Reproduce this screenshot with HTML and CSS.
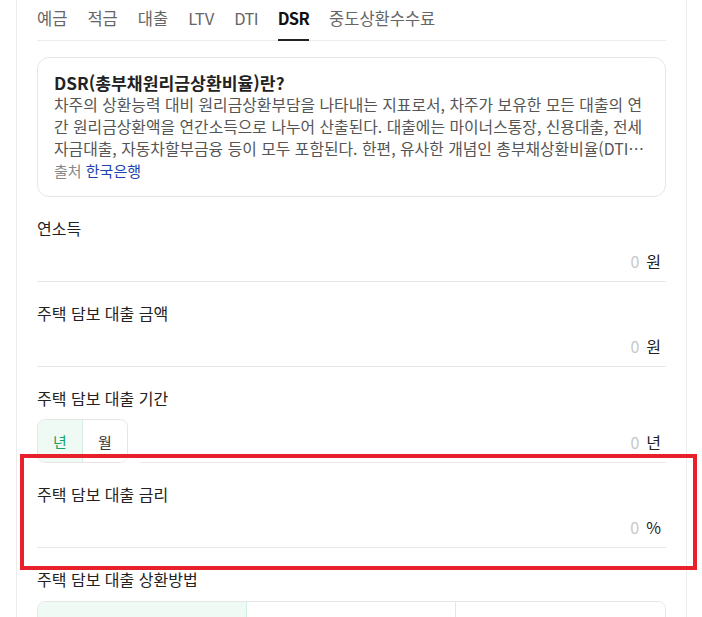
FILE: index.html
```html
<!DOCTYPE html>
<html lang="ko">
    <head>
        <meta charset="UTF-8" />
        <meta name="viewport" content="width=device-width, initial-scale=1.0" />
        <title>DSR 계산기</title>
        <link rel="stylesheet" href="styles.css">
    </head>
    <body>
        <div class="page">
            <nav class="tabs">
                <a class="tab">예금</a>
                <a class="tab">적금</a>
                <a class="tab">대출</a>
                <a class="tab">LTV</a>
                <a class="tab latin">DTI</a>
                <a class="tab latin active">DSR</a>
                <a class="tab">중도상환수수료</a>
            </nav>

            <div class="info-box">
                <h3 class="info-title">DSR(총부채원리금상환비율)란?</h3>
                <p class="info-text">차주의 상환능력 대비 원리금상환부담을 나타내는 지표로서, 차주가 보유한 모든 대출의 연간 원리금상환액을 연간소득으로 나누어 산출된다. 대출에는 마이너스통장, 신용대출, 전세자금대출, 자동차할부금융 등이 모두 포함된다. 한편, 유사한 개념인 총부채상환비율(DTI)은 주택담보대출의 원리금상환액과 기타대출의 이자상환액을 연간소득으로 나누어 산출한다.</p>
                <div class="info-source"><span>출처</span> <span class="source-link">한국은행</span></div>
            </div>

            <div class="field">
                <div class="field-label">연소득</div>
                <div class="field-row">
                    <div class="value"><span class="num">0</span><span class="unit">원</span></div>
                </div>
            </div>

            <div class="field">
                <div class="field-label">주택 담보 대출 금액</div>
                <div class="field-row">
                    <div class="value"><span class="num">0</span><span class="unit">원</span></div>
                </div>
            </div>

            <div class="field">
                <div class="field-label">주택 담보 대출 기간</div>
                <div class="field-row split">
                    <div class="toggle">
                        <button class="seg active">년</button>
                        <button class="seg">월</button>
                    </div>
                    <div class="value boxed"><span class="num">0</span><span class="unit">년</span></div>
                </div>
            </div>

            <div class="field">
                <div class="field-label">주택 담보 대출 금리</div>
                <div class="field-row">
                    <div class="value"><span class="num">0</span><span class="unit">%</span></div>
                </div>
            </div>

            <div class="field">
                <div class="field-label">주택 담보 대출 상환방법</div>
                <div class="methods">
                    <button class="method active"></button>
                    <button class="method"></button>
                    <button class="method"></button>
                </div>
            </div>
        </div>

        <div class="highlight"></div>
    </body>
</html>
```

FILE: styles.css
```css
* {
    margin: 0;
    padding: 0;
    box-sizing: border-box;
}

body {
    font-family: "Noto Sans CJK KR", "Noto Sans", sans-serif;
    background: #fff;
    color: #222;
}

.page {
    width: 671px;
    margin-left: 16px;
    min-height: 617px;
    padding: 0 20px;
    border-left: 1px solid #ececec;
    border-right: 1px solid #ececec;
}

/* tabs */
.tabs {
    display: flex;
    gap: 20px;
    border-bottom: 1px solid #ececec;
}

.tab {
    font-size: 16.5px;
    line-height: 24px;
    padding: 6px 0 9px;
    color: #666;
    border-bottom: 2px solid transparent;
    margin-bottom: -1px;
}

.tab.latin {
    letter-spacing: -0.7px;
}

.tab.active {
    color: #111;
    font-weight: 700;
    border-bottom-color: #222;
}

/* info */
.info-box {
    margin-top: 16px;
    padding: 14px 16px;
    border: 1px solid #e6e6e6;
    border-radius: 12px;
}

.info-title {
    font-size: 17.2px;
    line-height: 22px;
    font-weight: 700;
    color: #222;
}

.info-text {
    font-size: 15.85px;
    line-height: 22px;
    color: #555;
    display: -webkit-box;
    -webkit-line-clamp: 3;
    -webkit-box-orient: vertical;
    overflow: hidden;
}

.info-source {
    font-size: 15px;
    line-height: 22px;
    color: #888;
}

.source-link {
    color: #1c44b0;
}

/* fields */
.field {
    padding-top: 19px;
}

.field-label {
    font-size: 16px;
    line-height: 24px;
    color: #222;
}

.field-row {
    margin-top: 9px;
    border-bottom: 1px solid #e8e8e8;
    padding: 0 5px 8px;
    display: flex;
    justify-content: flex-end;
}

.field-row.split {
    padding: 0;
    border-bottom: none;
    align-items: flex-end;
    justify-content: space-between;
    gap: 12px;
}

.value {
    font-size: 16px;
    line-height: 24px;
    display: flex;
    gap: 7px;
}

.value.boxed {
    flex: 1;
    justify-content: flex-end;
    padding: 0 5px 8px;
    border-bottom: 1px solid #e8e8e8;
}

.num {
    color: #c8c8c8;
}

.unit {
    color: #222;
}

/* toggle */
.toggle {
    display: flex;
    width: 91px;
    height: 44px;
    border: 1px solid #e6e6e6;
    border-radius: 8px;
    overflow: hidden;
}

.seg {
    flex: 1;
    border: none;
    background: #fff;
    font-family: inherit;
    font-size: 15px;
    color: #333;
}

.seg.active {
    background: #f0faf5;
    color: #12a266;
    border-right: 1px solid #d3efe2;
}

/* repayment methods */
.methods {
    margin-top: 10px;
    display: grid;
    grid-template-columns: repeat(3, 1fr);
    height: 44px;
    border: 1px solid #e6e6e6;
    border-radius: 8px;
    overflow: hidden;
}

.method {
    border: none;
    border-right: 1px solid #e6e6e6;
    background: #fff;
}

.method:last-child {
    border-right: none;
}

.method.active {
    background: #f0faf5;
    border-right-color: #d3efe2;
}

/* annotation */
.highlight {
    position: absolute;
    left: 20px;
    top: 454px;
    width: 677px;
    height: 116px;
    border: 4px solid #e8202a;
}
```
